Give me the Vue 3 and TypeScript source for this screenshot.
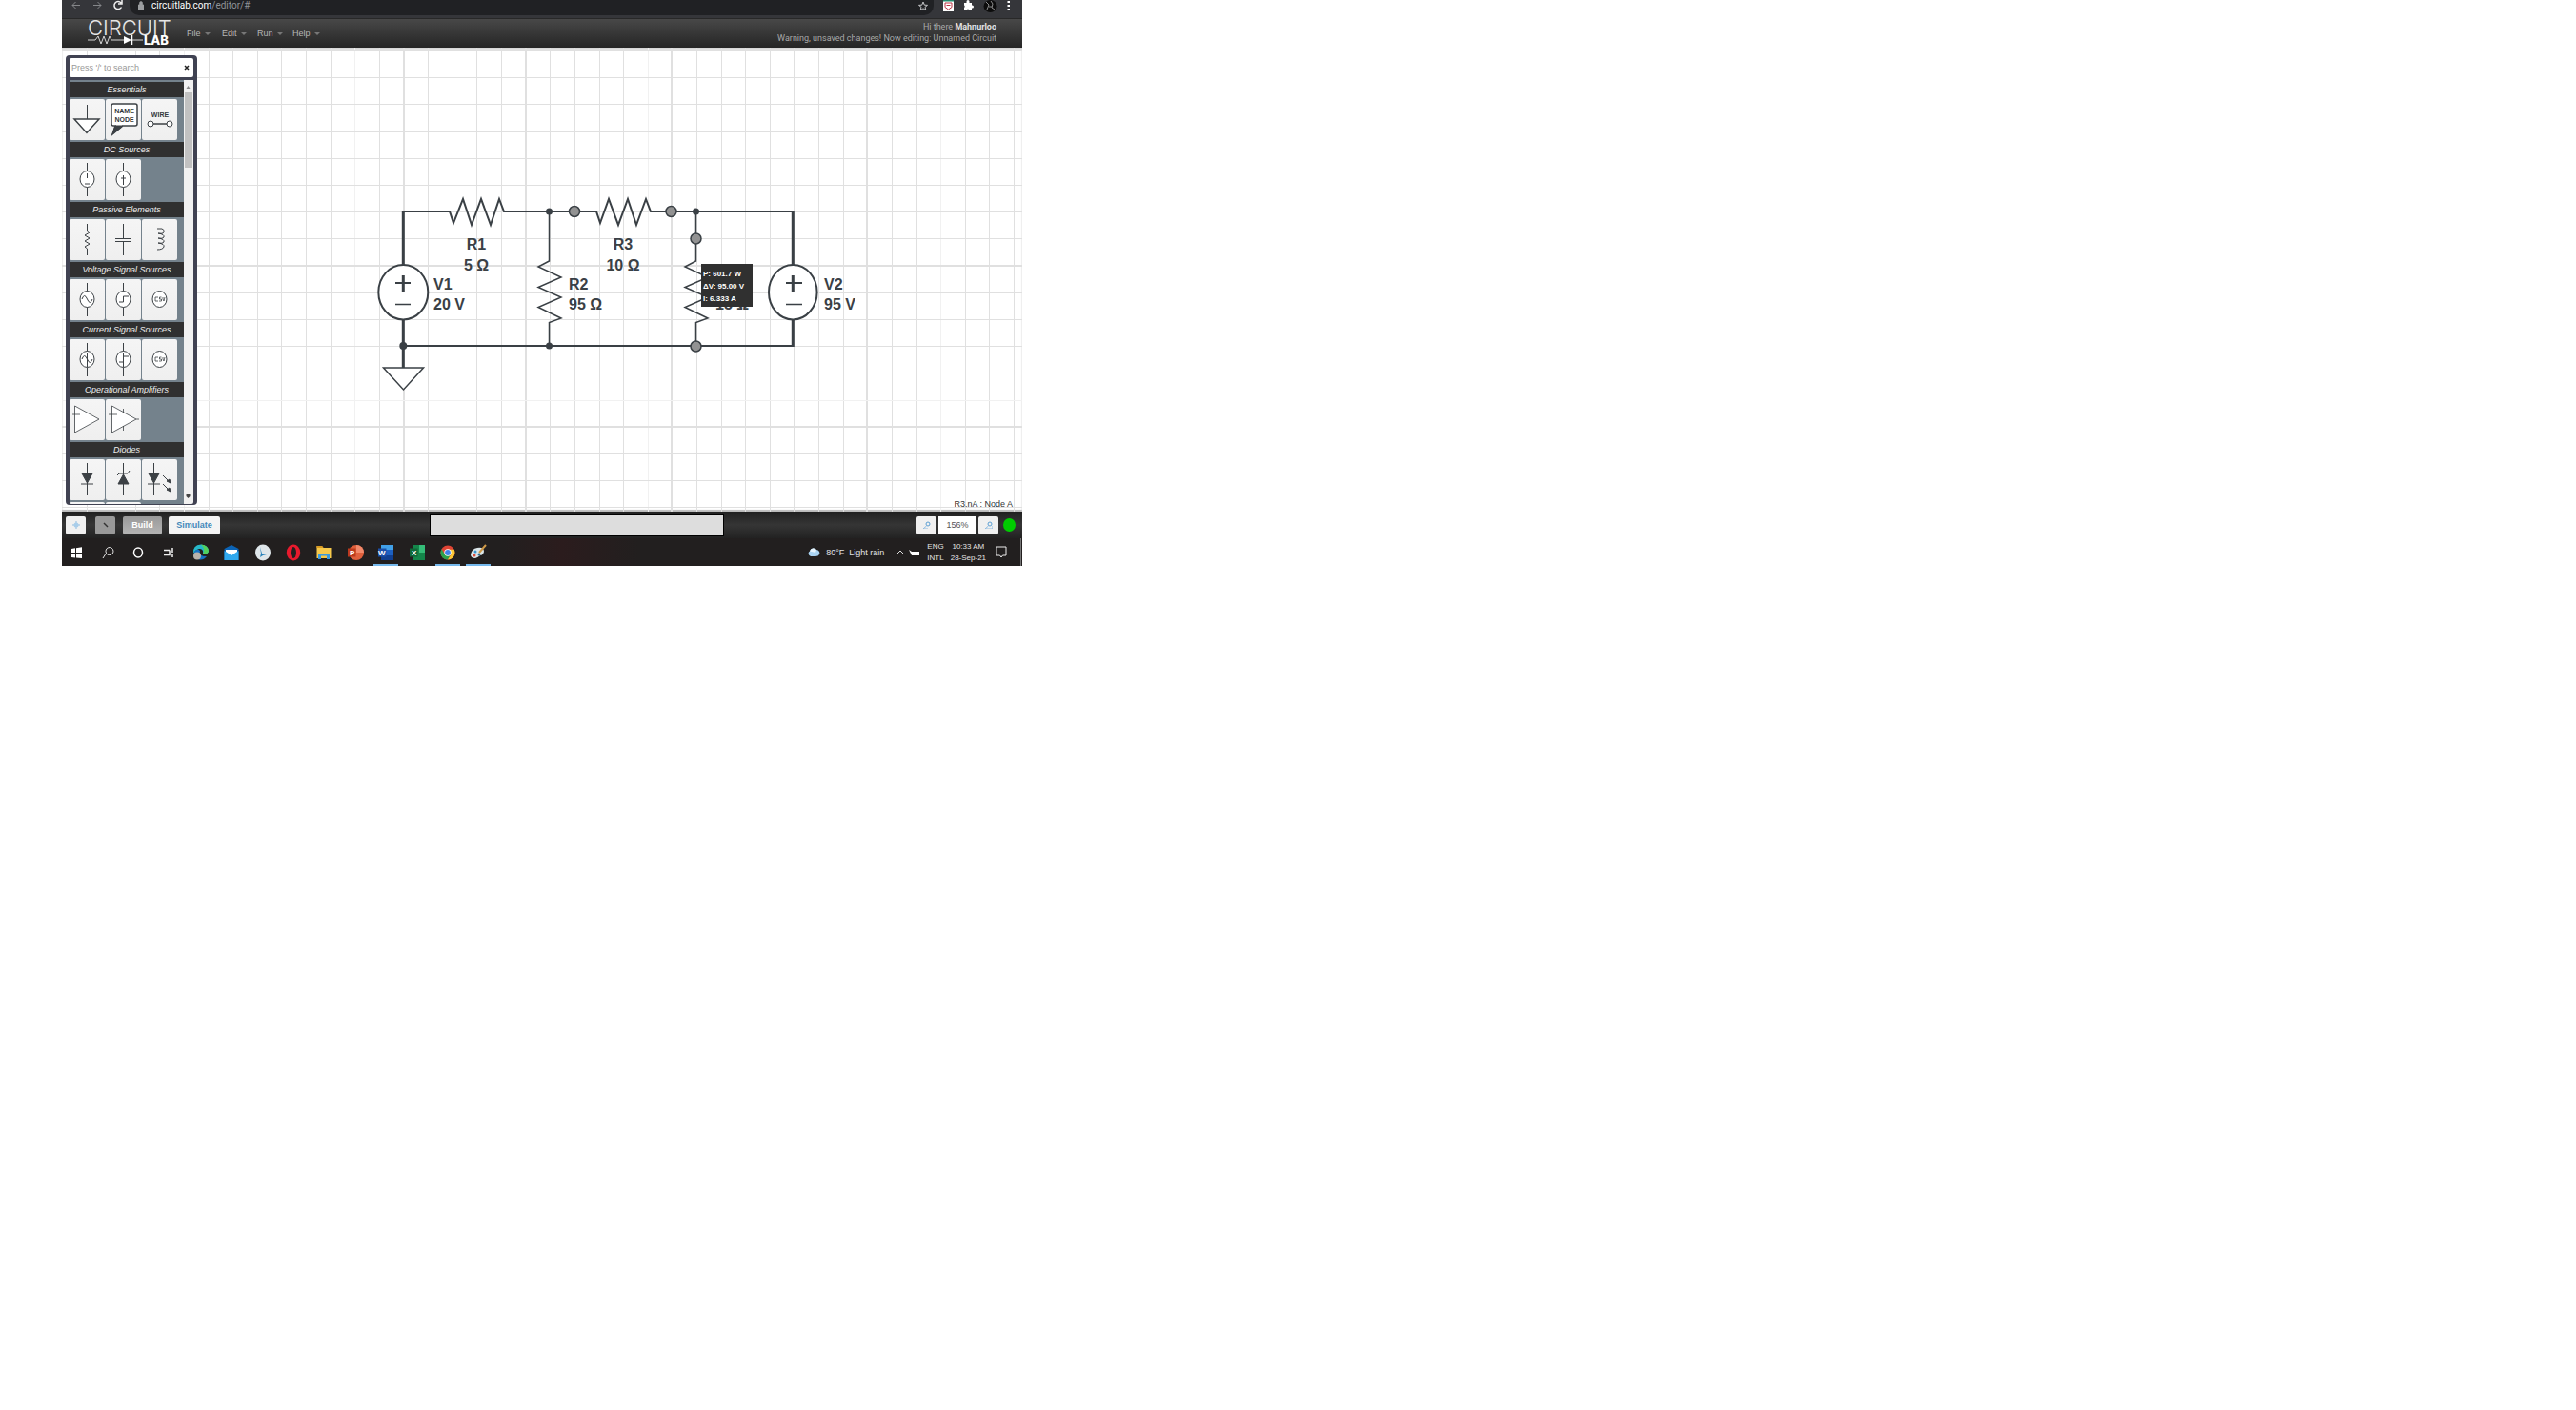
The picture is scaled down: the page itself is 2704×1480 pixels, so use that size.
<script setup lang="ts">
interface Section {
  title: string
  tiles: string[]
}

const menus: string[] = ['File', 'Edit', 'Run', 'Help']

const sections: Section[] = [
  { title: 'Essentials', tiles: ['ground', 'name', 'wire'] },
  { title: 'DC Sources', tiles: ['vdc', 'idc'] },
  { title: 'Passive Elements', tiles: ['resistor', 'capacitor', 'inductor'] },
  { title: 'Voltage Signal Sources', tiles: ['vsine', 'vstep', 'vcsv'] },
  { title: 'Current Signal Sources', tiles: ['isine', 'istep', 'icsv'] },
  { title: 'Operational Amplifiers', tiles: ['opamp', 'opamp-rails'] },
  { title: 'Diodes', tiles: ['diode', 'zener', 'led', 'schottky', 'photodiode'] },
]

const round = ['vdc', 'idc', 'vsine', 'vstep', 'vcsv', 'isine', 'istep', 'icsv']
const leaded = ['vdc', 'idc', 'vsine', 'vstep', 'isine', 'istep']

// Grid pitch of the schematic canvas, measured from the canvas corner.
const columns = Array.from({ length: 39 }, (_, i) => ({
  at: Math.round(25.5 + i * 25.62),
  kind: [13, 18, 24, 32].includes(i) ? 'major' : [4, 11, 23, 35].includes(i) ? 'faint' : '',
}))
const rows = Array.from({ length: 18 }, (_, i) => ({
  at: Math.round(3 + i * 28.2),
  kind: [3, 8, 14].includes(i) ? 'major' : [12, 13].includes(i) ? 'faint' : '',
}))

const pinned: string[] = [
  'Start', 'Search', 'Cortana', 'Task View', 'Edge', 'Mail', 'Clock',
  'Opera', 'Explorer', 'PowerPoint', 'Word', 'Excel', 'Chrome', 'Paint',
]
const running = ['Word', 'Chrome', 'Paint']
</script>

<template>
  <main class="desktop">
    <div class="browser">
      <nav class="nav">
        <button aria-label="Back"><svg width="10" height="12"><path d="M9 5.500H1M4.500 2L1 5.500L4.500 9" stroke="#85878a" fill="none" /></svg></button>
        <button aria-label="Forward"><svg width="10" height="12"><path d="M1 5.500H9M5.500 2L9 5.500L5.500 9" stroke="#85878a" fill="none" /></svg></button>
        <button aria-label="Reload"><svg width="10" height="12"><path d="M8 3A4 4 0 1 0 8.500 7.500M9 0V4H5" stroke="#f1f1f1" stroke-width="1.500" fill="none" /></svg></button>
      </nav>
      <div class="omnibox">
        <svg width="6" height="10"><path d="M0 4H6V10H0ZM1.500 4V2A1.500 1.500 0 0 1 4.500 2V4" fill="#9b9da0" stroke="#9b9da0" stroke-width=".6" /></svg>
        <a class="url" href="#">circuitlab.com<span>/editor/#</span></a>
        <button aria-label="Bookmark"><svg width="10" height="11"><path d="M5 1L6.300 4.200L9.500 4.400L7 6.400L7.900 9.700L5 7.900L2.100 9.700L3 6.400L.5 4.400L3.700 4.200Z" stroke="#c6c7c9" fill="none" /></svg></button>
      </div>
      <div class="extensions">
        <svg width="11" height="12"><path d="M0 0H11V12H0Z" fill="#fff" /><path d="M0 0H11V1.500H0Z" fill="#21876b" /><path d="M2 3H9V7.500L5.500 10L2 7.500Z" fill="none" stroke="#bd3445" /><path d="M3.500 5.500H7.500" stroke="#bd3445" /></svg>
        <svg width="11" height="12"><path d="M1 3H3.500V1.500A1.500 1.500 0 0 1 6.500 1.500V3H9V5.500H9.500A1.500 1.500 0 0 1 9.500 8.500H9V11H6.500A1.500 1.500 0 0 0 3.500 11H1V8A1.500 1.500 0 0 0 1 5.500Z" fill="#fff" /></svg>
        <svg width="15" height="14"><ellipse cx="7.500" cy="6.500" rx="7" ry="6.500" fill="#0c0c0c" /><path d="M3 2L6 5L4 10M8 1L10 4L9 8L12 10M6 7H9" stroke="#8c8c8c" fill="none" /></svg>
        <svg width="4" height="12"><path d="M.5 1H3V3H.500ZM.500 5H3V7H.500ZM.500 9H3V11H.500Z" fill="#fff" /></svg>
      </div>
    </div>

    <header class="header">
      <a class="logo" href="#" aria-label="Circuit Lab">
        <span class="circuit">CIRCUIT</span>
        <span class="lab">
          <svg width="58" height="10"><path d="M0 5H8L11 1L14 9L17 1L20 9L23 1L25 5H38M46 5H58" stroke="#d5d5d5" fill="none" /><path d="M38 1L46 5L38 9Z" fill="#fff" /><path d="M46.500 0V10" stroke="#fff" stroke-width="1.500" /></svg>
          <b>LAB</b>
        </span>
      </a>
      <nav class="menu">
        <button v-for="m in menus" :key="m">{{ m }}<i></i></button>
      </nav>
      <div class="account">
        <p>Hi there <b>Mahnurloo</b></p>
        <p>Warning, unsaved changes! Now editing: Unnamed Circuit</p>
      </div>
    </header>

    <section class="stage">
      <svg class="canvas" width="100%" height="100%">
        <g shape-rendering="crispEdges">
          <line v-for="c in columns" :key="'c' + c.at" class="grid" :class="c.kind" :x1="c.at" :x2="c.at" y1="0" y2="100%" />
          <line v-for="r in rows" :key="'r' + r.at" class="grid" :class="r.kind" x1="0" x2="100%" :y1="r.at" :y2="r.at" />
        </g>
        <g transform="translate(-65 -50)" class="circuit-lines">
          <path class="thick" d="M423.300 221V278M423.300 335V386M832.300 221V278M832.300 335V364" />
          <path class="wire" d="M422 222H472L476 234L486 209L495 236L505 209L515 236L524 209L529 222H626L630 234L639 209L649 236L659 209L668 236L678 209L683 222H833" />
          <path class="wire" d="M423 363H833" />
          <path class="thin" d="M576.500 222V274L565 280L589 291L565 301.500L589 312L565 322.500L589 334L576.500 338.500V363" />
          <path class="thin" d="M730.500 222V274L719 280L743 291L719 301.500L743 312L719 322.500L743 334L730.500 338.500V363" />
          <path class="thin ground" d="M402.500 386H444.500L423.500 409Z" />
          <ellipse class="source" cx="423.300" cy="306.700" rx="26" ry="28.700" />
          <ellipse class="source" cx="832.300" cy="306.700" rx="25.300" ry="28.700" />
          <path class="thick" d="M423.300 289V307M832.300 289V307" />
          <path class="wire" d="M415 297H431M825 297H842" />
          <path class="thin" d="M415 319.500H431M825 319.500H842" />
          <g fill="#3a4045">
            <circle cx="423.300" cy="363" r="4" />
            <circle cx="576.500" cy="222" r="3.500" />
            <circle cx="576.500" cy="363" r="3.500" />
            <circle cx="730.500" cy="222" r="3.500" />
          </g>
          <g class="terminal">
            <circle cx="603" cy="222" r="5.500" />
            <circle cx="704.500" cy="222" r="5.500" />
            <circle cx="730.500" cy="250.500" r="5.500" />
            <circle cx="730.500" cy="363.500" r="5.500" />
          </g>
          <g class="label">
            <text x="500" y="262" text-anchor="middle">R1</text>
            <text x="500" y="284" text-anchor="middle">5 Ω</text>
            <text x="654" y="262" text-anchor="middle">R3</text>
            <text x="654" y="284" text-anchor="middle">10 Ω</text>
            <text x="455" y="304">V1</text>
            <text x="455" y="325">20 V</text>
            <text x="597" y="304">R2</text>
            <text x="597" y="325">95 Ω</text>
            <text x="751" y="325">15 Ω</text>
            <text x="865" y="304">V2</text>
            <text x="865" y="325">95 V</text>
          </g>
          <rect x="736" y="277" width="54" height="45" fill="#303030" />
          <g class="reading">
            <text x="738" y="290">P: 601.7 W</text>
            <text x="738" y="303">ΔV: 95.00 V</text>
            <text x="738" y="316">I: 6.333 A</text>
          </g>
        </g>
      </svg>

      <aside class="palette">
        <div class="search">
          <input type="text" aria-label="Search components" placeholder="Press '/' to search">
          <button aria-label="Clear search"><svg width="6" height="6"><path d="M1 1L5 5M5 1L1 5" stroke="#222" stroke-width="1.500" /></svg></button>
        </div>
        <div class="tray">
          <div class="list">
            <template v-for="s in sections" :key="s.title">
              <h2>{{ s.title }}</h2>
              <div class="tiles">
                <button v-for="t in s.tiles" :key="t" :aria-label="t">
                  <svg width="37" height="43" fill="none" stroke="#3c4145">
                    <template v-if="t === 'ground'"><path d="M18.500 6V21" /><path d="M5 21H31L18 35.500Z" stroke-width="1.500" fill="#fff" /></template>
                    <template v-if="t === 'name'">
                      <path d="M8 5H31Q33 5 33 7V26Q33 28 31 28H18L7 37L10 28H8Q6 28 6 26V7Q6 5 8 5Z" stroke-width="1.500" fill="#fff" />
                      <path d="M10 28H18L7 37Z" fill="#3c4145" />
                      <text x="19.500" y="15" text-anchor="middle">NAME</text><text x="19.500" y="24" text-anchor="middle">NODE</text>
                    </template>
                    <template v-if="t === 'wire'"><text x="19" y="19" text-anchor="middle">WIRE</text><path d="M11 26H27" stroke-width="1.500" /><circle cx="9" cy="26" r="3" fill="#fff" /><circle cx="29" cy="26" r="3" fill="#fff" /></template>
                    <path v-if="leaded.includes(t)" d="M18.500 4V39" />
                    <ellipse v-if="round.includes(t)" cx="18.500" cy="21" rx="7.500" ry="8.500" fill="#fff" />
                    <path v-if="t === 'vdc'" d="M18.500 15V20M16 26H21" />
                    <path v-if="t === 'idc'" d="M18.500 17V27M16 20H21" />
                    <path v-if="t === 'vsine'" d="M13 21Q15.500 14 18.500 21T24 21" />
                    <path v-if="t === 'isine'" d="M13 21Q15.500 14 18.500 21T24 21M18.500 14V29" />
                    <path v-if="t === 'vstep'" d="M14 24H18.500V18H24" />
                    <path v-if="t === 'istep'" d="M14 24H18.500V18H24M18.500 14V29" />
                    <path v-if="t === 'vcsv' || t === 'icsv'" d="M17 19H14V23H17M20.500 19H18.500V21H20.500V23H18M22 19V21L23 23L24 19" stroke-width=".8" />
                    <path v-if="t === 'resistor'" d="M18.500 5V12L21 14L16 17L21 20L16 23L21 26L16 29L18.500 31V38" />
                    <path v-if="t === 'capacitor'" d="M18.500 5V20M10 20.500H26M10 23.500H26M18.500 24V38" />
                    <path v-if="t === 'inductor'" d="M16 10H21Q24 11 23 14Q22 16 17 15Q24 16 23 19Q22 21 17 20Q24 21 23 24Q22 26 17 25Q24 26 23 29Q22 32 16 32" />
                    <path v-if="t === 'opamp'" d="M5.500 7L31 21L5.500 35ZM3 16H11" fill="#fff" stroke-width=".8" />
                    <path v-if="t === 'opamp-rails'" d="M6.500 7L32 21L6.500 35ZM3 16H12M18.500 10V14M18.500 28V33M32 21H35" fill="#fff" stroke-width=".8" />
                    <template v-if="t === 'diode'"><path d="M18.500 4V38M12 26H25" /><path d="M13 15H24L18.500 25Z" fill="#3c4145" /></template>
                    <template v-if="t === 'zener'"><path d="M18.500 4V38M12 17L14 15H23L25 12" /><path d="M13 26H24L18.500 16Z" fill="#3c4145" /></template>
                    <template v-if="t === 'led'"><path d="M12.500 4V38M6 26H19M22 17L30 25M22 26L30 34" /><path d="M7 15H18L12.500 25ZM30 25L26 23L29 21ZM30 34L26 32L29 30Z" fill="#3c4145" /></template>
                  </svg>
                </button>
              </div>
            </template>
          </div>
          <div class="scroll">
            <svg width="9" height="13"><path d="M2.500 9H6.500L4.500 6Z" fill="#8b8b8b" /></svg>
            <span></span>
            <svg width="9" height="13"><path d="M2.500 3H6.500V5L4.500 7L2.500 5Z" fill="#444" /></svg>
          </div>
        </div>
      </aside>
      <p class="hover">R3.nA : Node A</p>
    </section>

    <footer class="controls">
      <button class="tool" aria-label="Move"><svg width="8" height="8"><path d="M4 0V8M0 4H8" stroke="#8dbbe0" /><circle cx="4" cy="4" r="2.500" fill="#a8cdea" /></svg></button>
      <button class="tool dark" aria-label="Select"><svg width="8" height="8"><path d="M2 2L6 6" stroke="#333" stroke-width="1.500" /></svg></button>
      <button class="mode build">Build</button>
      <button class="mode simulate">Simulate</button>
      <div class="message"></div>
      <button class="tool" aria-label="Zoom out"><svg width="8" height="8"><circle cx="5" cy="3" r="2" stroke="#5b9fd3" fill="none" /><path d="M3.500 5L0 8H5" stroke="#8dbbe0" fill="none" /></svg></button>
      <input class="zoom" type="text" aria-label="Zoom level" value="156%">
      <button class="tool" aria-label="Zoom in"><svg width="8" height="8"><circle cx="5" cy="3" r="2" stroke="#5b9fd3" fill="none" /><path d="M3.500 5L0 8H8V5" stroke="#8dbbe0" fill="none" /></svg></button>
      <span class="status"></span>
    </footer>

    <div class="taskbar">
      <div class="pinned">
        <button v-for="p in pinned" :key="p" :aria-label="p" :class="{ running: running.includes(p) }">
          <svg width="18" height="18" fill="none">
            <path v-if="p === 'Start'" d="M3 5L7 4.300V9H3ZM8 4.200L14 3.200V9H8ZM3 10H7V14.500L3 14ZM8 10H14V15L8 14.500Z" fill="#fff" />
            <path v-if="p === 'Search'" d="M6.500 9.500A4 4 0 1 1 9.500 11.500Q7 11.500 6.500 9.500L3 15" stroke="#e8e8e8" />
            <ellipse v-if="p === 'Cortana'" cx="8" cy="9" rx="4.500" ry="5" stroke="#fff" stroke-width="1.500" />
            <path v-if="p === 'Task View'" d="M3 6.500H9M3 11.500H9V6.500M12 4V9M12 11V14" stroke="#f1f1f1" stroke-width="1.500" />
            <template v-if="p === 'Edge'">
              <path d="M1 10Q0 1 9 .5Q17 1 17 8Q16 11 11 10Q12 5 7 5Q3 6 1 10Z" fill="#26b7c8" /><path d="M9 .5Q17 1 17 8Q16 11 11 10Q14 5 9 .5Z" fill="#52d15c" /><path d="M2 8Q5 4 8 7Q6 13 15 13Q11 18 6 16Q1 13 2 8Z" fill="#1672c4" /><circle cx="5" cy="12.500" r="4" fill="#b9b2ab" />
            </template>
            <template v-if="p === 'Mail'"><path d="M1.500 5L9 1L16.500 5V17H1.500Z" fill="#0b63b5" /><path d="M3 6H15V13H3Z" fill="#fff" /><path d="M1.500 7L9 12L16.500 7V17H1.500Z" fill="#2fa8ee" /></template>
            <template v-if="p === 'Clock'"><ellipse cx="9" cy="9" rx="8" ry="8.500" fill="#dfe6ea" /><path d="M6 3L8 10L13 11L9 12L6 14L7 10Z" fill="#2781ba" /></template>
            <template v-if="p === 'Opera'"><ellipse cx="9" cy="9" rx="7.200" ry="8.500" fill="#e81a2d" /><ellipse cx="9" cy="9" rx="3" ry="6" fill="#221f1f" /></template>
            <template v-if="p === 'Explorer'"><path d="M1.500 2H7L8.500 4H16.500V15H1.500Z" fill="#f7c94b" /><path d="M1.500 2H7L8.500 4H1.500Z" fill="#d99a22" /><path d="M3 16V10H15V16H12V12.500H6V16Z" fill="#3b9ade" /></template>
            <template v-if="p === 'PowerPoint'"><circle cx="10" cy="9" r="8" fill="#e0603c" /><path d="M10 1A8 8 0 0 1 18 9H10Z" fill="#f28a6b" /><path d="M1 4.500H9.500V13.500H1Z" fill="#bd3a1d" /><text x="3" y="12">P</text></template>
            <template v-if="p === 'Word'"><path d="M4 1H17V17H4Z" fill="#1d60c2" /><path d="M4 1H17V6H4Z" fill="#41a0e8" /><path d="M4 12H17V17H4Z" fill="#103f91" /><path d="M1 4.500H9.500V13.500H1Z" fill="#1b4fa8" /><text x="1" y="12">W</text></template>
            <template v-if="p === 'Excel'"><path d="M4 1H17V17H4Z" fill="#14864a" /><path d="M11 1H17V9H11Z" fill="#35bd78" /><path d="M1 4.500H9.500V13.500H1Z" fill="#0f6938" /><text x="3" y="12">X</text></template>
            <template v-if="p === 'Chrome'"><circle cx="9" cy="9" r="7.500" fill="#e04435" /><path d="M2.500 5.200A7.500 7.500 0 0 0 9 16.500L12 11L6 11Z" fill="#2ba24c" /><path d="M9 16.500A7.500 7.500 0 0 0 15.700 5.800H9L12.500 11Z" fill="#fcc934" /><circle cx="9" cy="9" r="3.700" fill="#fff" /><circle cx="9" cy="9" r="2.900" fill="#3f82e8" /></template>
            <template v-if="p === 'Paint'"><path d="M1 11Q2 5 8 4Q15 3 15 8Q14 12 11 12Q9 14 6 15Q1 15 1 11Z" fill="#dce6ea" /><path d="M17 1L10 9" stroke="#d09a48" stroke-width="2" /><circle cx="6" cy="8" r="1.500" fill="#3998d0" /><circle cx="5" cy="12" r="1.500" fill="#d94b39" /><circle cx="10" cy="11" r="1.500" fill="#346f92" /></template>
          </svg>
        </button>
      </div>
      <div class="tray-area">
        <svg width="13" height="12"><path d="M3 10A3 3 0 0 1 2 4.500A4 4 0 0 1 9 3A3.500 3.500 0 0 1 12 8Q11 10 8 10Z" fill="#a9d3f2" /><path d="M2 4.500A4 4 0 0 1 9 3L8 6Z" fill="#e6f4fd" /></svg>
        <span class="weather">80°F&nbsp; Light rain</span>
        <svg width="10" height="8"><path d="M1 6L5 2L9 6" stroke="#ddd" fill="none" /></svg>
        <svg width="12" height="8"><path d="M0 1L3 3H11V7H3Z" fill="#fff" /></svg>
        <p>ENG<br>INTL</p>
        <p class="time">10:33 AM<br>28-Sep-21</p>
        <svg class="notice" width="12" height="13"><path d="M1 1H11V10H7.500L6 12L4.500 10H1Z" stroke="#eee" fill="none" /></svg>
      </div>
    </div>
  </main>
</template>

<style>
body {
  margin: 0;
  background: #fff;
}
</style>

<style scoped>
.desktop {
  width: 37.28vw;
  margin-left: 65px;
  font: 9px/12px 'Liberation Sans', Arial, sans-serif;
  color: #ddd;
}
button {
  display: flex;
  align-items: center;
  justify-content: center;
  padding: 0;
  border: 0;
  background: none;
  color: inherit;
  font: inherit;
}
a {
  color: inherit;
  text-decoration: none;
}
p,
h2 {
  margin: 0;
}
svg {
  display: block;
  flex: none;
}
input {
  box-sizing: border-box;
  min-width: 0;
  border: 0;
  padding: 0 2px;
  font: inherit;
}

.browser {
  display: flex;
  height: 19px;
  background: #35363a;
}
.nav {
  display: flex;
  gap: 12px;
  align-items: flex-start;
  width: 61px;
  padding-left: 10px;
}
.omnibox {
  display: flex;
  flex: 1;
  align-items: center;
  height: 12px;
  padding: 0 6px 4px 9px;
  border-radius: 0 0 10px 10px;
  background: #202124;
}
.url {
  flex: 1;
  margin-left: 8px;
  font-size: 10px;
  font-family: Roboto, sans-serif;
  color: #fff;
}
.url span {
  color: #909296;
}
.extensions {
  display: flex;
  gap: 10px;
  width: 83px;
  padding-left: 10px;
}

.header {
  display: flex;
  box-sizing: border-box;
  height: 31px;
  padding: 0 27px;
  border-top: 1px solid #282828;
  background: linear-gradient(#484848, #252525);
}
.logo {
  width: 91px;
  font-family: Inter, sans-serif;
  color: #e6e6e6;
}
.circuit {
  display: block;
  margin-top: 2px;
  font-size: 22px;
  font-weight: 300;
  line-height: 15px;
}
.lab {
  display: flex;
  align-items: center;
  gap: 1px;
}
.lab b {
  font-size: 13px;
  line-height: 10px;
  font-weight: 800;
  color: #fff;
}
.menu {
  display: flex;
  align-items: center;
  margin-left: 13px;
  color: #b5b5b5;
}
.menu button {
  justify-content: flex-start;
  gap: 4px;
  min-width: 37px;
}
.menu i {
  border: 3px solid transparent;
  border-top-color: #777;
  border-bottom: 0;
}
.account {
  flex: 1;
  padding-top: 2px;
  text-align: right;
  font-family: Roboto, sans-serif;
  color: #a9a9a9;
}
.account b {
  color: #e2e2e2;
}

.stage {
  position: relative;
  display: flex;
  align-items: flex-end;
  justify-content: space-between;
  padding: 8px 10px 7px 4px;
  box-shadow: inset 0 2px 2px #d5d5d5, inset 0 -2px 1px #bbb;
}
.canvas {
  position: absolute;
  inset: 0;
}
.grid {
  stroke: #e0e0e0;
}
.grid.major {
  stroke: #e0e0e0;
  stroke-width: 2px;
}
.grid.faint {
  stroke: #f1f1f1;
}
.circuit-lines path {
  stroke: #3a4045;
  fill: none;
}
.circuit-lines .ground {
  fill: #fff;
}
.circuit-lines .thick {
  stroke-width: 3px;
}
.circuit-lines .wire {
  stroke-width: 2px;
}
.circuit-lines .thin {
  stroke-width: 1.5px;
}
.source {
  fill: #fff;
  stroke: #3a4045;
  stroke-width: 2px;
}
.terminal {
  fill: #929292;
  stroke: #3a4045;
  stroke-width: 1.5px;
}
.label {
  fill: #3a4045;
  font-size: 16px;
  font-weight: 700;
}
.reading {
  fill: #fff;
  font-size: 8px;
  font-weight: 700;
}

.palette {
  position: relative;
  width: 130px;
  padding: 3px 4px 1px;
  border-radius: 4px;
  background: #404252;
}
.search {
  display: flex;
  height: 20px;
  margin-bottom: 3px;
  border-radius: 2px;
  background: #fff;
}
.search input {
  flex: 1;
  background: none;
}
.search input::placeholder {
  color: #999;
}
.search button {
  width: 14px;
}
.tray {
  display: flex;
  height: 445px;
  overflow: hidden;
  border-radius: 0 0 2px 2px;
}
.list {
  flex: 1;
  padding-top: 2px;
  background: #74828c;
}
h2 {
  background: #303030;
  font-size: 9px;
  line-height: 16px;
  font-style: italic;
  font-weight: 400;
  text-align: center;
  color: #eee;
}
.tiles {
  display: flex;
  flex-wrap: wrap;
  gap: 2px 1px;
  padding: 2px 0;
}
.tiles button {
  width: 37px;
  height: 43px;
  border-radius: 2px;
  background: linear-gradient(#f5f5f5, #efefef);
}
.tiles text {
  fill: #33383c;
  stroke: none;
  font-size: 7px;
  font-weight: 700;
}
.scroll {
  display: flex;
  flex-direction: column;
  width: 10px;
  background: #f1f1f1;
}
.scroll span {
  height: 79px;
  margin: 0 1px auto;
  background: #c1c1c1;
}
.hover {
  position: relative;
  margin-bottom: -5px;
  color: #333;
}

.controls {
  display: flex;
  align-items: center;
  height: 28px;
  padding: 0 7px 0 4px;
  background: linear-gradient(#202020, #353535 50%, #222);
}
.tool {
  width: 21px;
  height: 19px;
  border-radius: 2px;
  background: #f0f0f0;
}
.dark {
  margin: 0 8px 0 10px;
  background: #999;
}
.mode {
  height: 19px;
  border-radius: 2px;
  font-weight: 700;
}
.build {
  width: 41px;
  margin-right: 7px;
  background: linear-gradient(#999, #b5b5b5);
  color: #fff;
}
.simulate {
  width: 54px;
  background: #f4f4f4;
  color: #4388ba;
}
.message {
  box-sizing: border-box;
  width: 31%;
  height: 23px;
  margin: 0 auto 0 220px;
  border: 1px solid #000;
  background: #ddd;
}
.zoom {
  width: 40px;
  height: 19px;
  margin: 0 2px;
  text-align: center;
  color: #555;
  background: #fff;
}
.status {
  width: 13px;
  height: 14px;
  margin-left: 5px;
  border-radius: 50%;
  background: #0c0;
}

.taskbar {
  display: flex;
  justify-content: space-between;
  height: 29px;
  background: linear-gradient(90deg, #221f1f 46%, #2b1c1d 52%, #221f1f 60%);
}
.pinned {
  display: grid;
  grid-template-columns: repeat(14, 1fr);
  width: 45%;
}
.pinned button {
  padding-top: 2px;
  border-bottom: 2px solid transparent;
}
.pinned .running {
  background: linear-gradient(#76b9ed, #76b9ed) center bottom / 26px 2px no-repeat border-box;
}
.pinned text {
  fill: #fff;
  font-size: 8px;
  font-weight: 700;
}
.tray-area {
  display: flex;
  align-items: center;
  padding-right: 14px;
  margin-right: 1px;
  border-right: 1px solid #777;
  font-size: 8px;
  color: #e4e4e4;
}
.weather {
  margin: 0 12px 0 6px;
  font-size: 9px;
}
.tray-area svg + svg {
  margin: 0 7px 0 4px;
}
.time {
  margin: 0 10px 0 7px;
  text-align: center;
}
</style>
